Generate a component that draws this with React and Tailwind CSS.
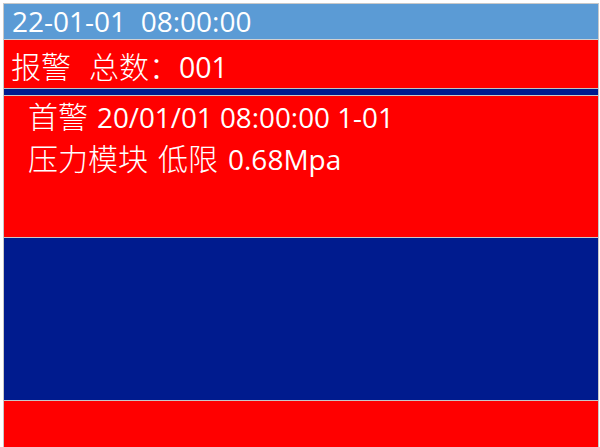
export default function App() {
  const font = { fontFamily: '"Open Sans", "Noto Sans CJK SC", sans-serif' };
  return (
    <div className="w-[600px] h-[447px] bg-white overflow-hidden pt-[3px]" style={font}>
      <div className="ml-[3px] w-[596px] border-x border-[#c8c8c8] flex flex-col text-white">
        <div className="border-t border-[#c8c8c8] h-[36px] bg-[#5b9bd5] flex items-center pl-[8px] text-[28px] leading-none whitespace-pre">
          <span className="mt-[-1px]">22-01-01  08:00:00</span>
        </div>
        <div className="border-t border-[#d0d0d0] h-[49px] bg-[#ff0000] flex items-center pl-[7px] text-[30px] leading-none font-light">
          <span className="mt-[5px] whitespace-nowrap">
            报警<span className="inline-block w-[18px]"></span>总数：<span className="text-[28.5px] font-normal">001</span>
          </span>
        </div>
        <div className="border-t border-[#c0c0c0] h-[7px] bg-[#001b8e]"></div>
        <div className="border-t border-[#c8c8c8] h-[142px] bg-[#ff0000] pl-[24px] text-[30px] leading-[42px] font-light whitespace-nowrap">
          <div>首警<span className="inline-block w-[9px]"></span><span className="text-[27.8px] font-normal">20/01/01 08:00:00 1-01</span></div>
          <div>压力模块<span className="inline-block w-[10px]"></span>低限<span className="inline-block w-[10px]"></span><span className="text-[28px] font-normal">0.68Mpa</span></div>
        </div>
        <div className="border-t border-[#c8c8c8] h-[163px] bg-[#001b8e]"></div>
        <div className="border-t border-[#c8c8c8] h-[47px] bg-[#ff0000]"></div>
      </div>
    </div>
  );
}
